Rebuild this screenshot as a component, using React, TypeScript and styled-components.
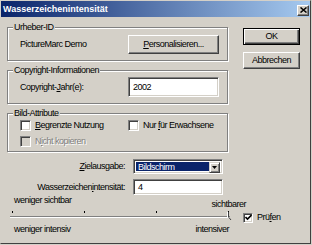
import React from 'react';
import styled, { createGlobalStyle, css } from 'styled-components';

const FONT = `"Liberation Sans", Arial, sans-serif`;

const Global = createGlobalStyle`
  html, body { margin: 0; padding: 0; background: #d4d0c8; }
  * { box-sizing: border-box; }
`;

const Window = styled.div`
  width: 311px;
  height: 244px;
  background: #d4d0c8;
  border-top: 1px solid #d4d0c8;
  border-left: 1px solid #d4d0c8;
  border-right: 1px solid #404040;
  border-bottom: 1px solid #404040;
  font: 9px/11px ${FONT};
  letter-spacing: -0.5px;
  color: #000;
  display: flex;
  flex-direction: column;
  overflow: hidden;
`;

const TitleBar = styled.div`
  height: 16px;
  background: linear-gradient(to right, #0a246a, #a6caf0);
  display: flex;
  align-items: center;
  justify-content: space-between;
  padding: 0 1px 0 2px;
`;

const TitleText = styled.span`
  font: bold 9px/11px "Liberation Sans", Arial, sans-serif;
  letter-spacing: 0;
  color: #fff;
`;

const CloseButton = styled.div`
  width: 12px;
  height: 11px;
  margin-top: 2px;
  background: #d4d0c8;
  border: 1px solid;
  border-color: #fff #404040 #404040 #fff;
  box-shadow: inset -1px -1px 0 #808080;
  display: flex;
  align-items: center;
  justify-content: center;
`;

const Body = styled.div`
  flex: 1;
  padding: 0 0 0 6px;
  display: flex;
  flex-direction: column;
`;

const TopRow = styled.div`
  display: flex;
  align-items: flex-start;
`;

const LeftCol = styled.div`
  width: 221px;
  display: flex;
  flex-direction: column;
  padding-top: 5px;
  gap: 4px;
`;

const RightCol = styled.div`
  margin-left: 15px;
  padding-top: 11px;
  display: flex;
  flex-direction: column;
  gap: 7px;
`;

const Group = styled.fieldset<{ $pt: number; $pb: number }>`
  margin: 0;
  min-width: 0;
  border: 1px solid #808080;
  box-shadow: inset 1px 1px 0 #fff, 1px 1px 0 #fff;
  padding: ${p => p.$pt}px 0 ${p => p.$pb}px 5px;
`;

const Legend = styled.legend`
  padding: 0 1px;
  background: #d4d0c8;
  line-height: 11px;
`;

const Row = styled.div<{ $h: number; $mt?: number }>`
  display: flex;
  align-items: center;
  height: ${p => p.$h}px;
  margin-top: ${p => p.$mt ?? 0}px;
  padding-left: 7px;
`;

const Label = styled.span<{ $w?: number }>`
  width: ${p => (p.$w ? `${p.$w}px` : 'auto')};
  white-space: nowrap;
`;

const U = styled.span`
  text-decoration: underline;
`;

const Button = styled.button<{ $w: number; $h: number; $default?: boolean }>`
  font: inherit;
  letter-spacing: inherit;
  color: #000;
  background: #d4d0c8;
  width: ${p => p.$w}px;
  height: ${p => p.$h}px;
  padding: 0;
  border: 1px solid;
  border-color: #fff #404040 #404040 #fff;
  box-shadow: inset -1px -1px 0 #808080;
  ${p =>
    p.$default &&
    css`
      border-color: #000;
      box-shadow: inset 1px 1px 0 #fff, inset -1px -1px 0 #404040, inset -2px -2px 0 #808080;
    `}
`;

const sunken = css`
  background: #fff;
  border: 1px solid;
  border-color: #808080 #fff #fff #808080;
  box-shadow: inset 1px 1px 0 #404040, inset -1px -1px 0 #d4d0c8;
`;

const TextInput = styled.div<{ $w: number; $h: number }>`
  ${sunken};
  width: ${p => p.$w}px;
  height: ${p => p.$h}px;
  display: flex;
  align-items: center;
  padding-left: 4px;
`;

const CheckBox = styled.span<{ $size: number; $disabled?: boolean }>`
  ${sunken};
  width: ${p => p.$size}px;
  height: ${p => p.$size}px;
  flex: none;
  display: inline-flex;
  align-items: center;
  justify-content: center;
  ${p => p.$disabled && css`background: #d4d0c8;`}
`;

const CheckLabel = styled.span<{ $disabled?: boolean }>`
  margin-left: 4px;
  white-space: nowrap;
  ${p =>
    p.$disabled &&
    css`
      color: #808080;
      text-shadow: 1px 1px 0 #fff;
    `}
`;

const CheckItem = styled.label<{ $w?: number }>`
  display: flex;
  align-items: center;
  width: ${p => (p.$w ? `${p.$w}px` : 'auto')};
`;

const FormGrid = styled.div`
  margin-top: 7px;
  display: grid;
  grid-template-columns: 118px 90px;
  column-gap: 8px;
  row-gap: 5px;
  align-items: center;
`;

const FormLabel = styled.span`
  text-align: right;
  white-space: nowrap;
`;

const Select = styled.div`
  ${sunken};
  height: 15px;
  display: flex;
  padding: 2px;
`;

const SelectValue = styled.div`
  flex: 1;
  background: #0a246a;
  color: #fff;
  padding-left: 2px;
  line-height: 11px;
`;

const DropButton = styled.div`
  width: 11px;
  height: 11px;
  background: #d4d0c8;
  border: 1px solid;
  border-color: #d4d0c8 #404040 #404040 #d4d0c8;
  box-shadow: inset 1px 1px 0 #fff, inset -1px -1px 0 #808080;
  display: flex;
  align-items: center;
  justify-content: center;
`;

const SliderSection = styled.div`
  display: flex;
  flex-direction: column;
  padding-left: 7px;
`;

const LabelPair = styled.div<{ $w: number }>`
  display: flex;
  justify-content: space-between;
  align-items: flex-start;
  width: ${p => p.$w}px;
`;

const Offset = styled.span<{ $top: number }>`
  padding-top: ${p => p.$top}px;
  white-space: nowrap;
`;

const TrackRow = styled.div`
  display: flex;
  align-items: center;
  margin-left: -4px;
  margin-top: 0;
  height: 13px;
`;

const Track = styled.svg`
  display: block;
  flex: none;
`;

const PruefenItem = styled.label`
  display: flex;
  align-items: center;
  margin-left: 11px;
  margin-top: 2px;
`;

const BottomLabels = styled(LabelPair)`
  margin-top: 1px;
`;

const Check = () => (
  <svg width="7" height="7" viewBox="0 0 7 7">
    <path d="M0.5 3 L2.5 5 L6.5 1" fill="none" stroke="#000" strokeWidth="1.6" />
  </svg>
);

export default function App() {
  const ticks = [2, 74, 146, 218];
  return (
    <>
      <Global />
      <Window>
        <TitleBar>
          <TitleText>Wasserzeichenintensität</TitleText>
          <CloseButton>
            <svg width="7" height="6" viewBox="0 0 7 6">
              <path d="M0.5 0.5 L6.5 5.5 M6.5 0.5 L0.5 5.5" stroke="#000" strokeWidth="1.5" />
            </svg>
          </CloseButton>
        </TitleBar>
        <Body>
          <TopRow>
            <LeftCol>
              <Group $pt={2} $pb={6}>
                <Legend>Urheber-ID</Legend>
                <Row $h={19}>
                  <Label $w={108}>PictureMarc Demo</Label>
                  <Button $w={91} $h={19}>
                    <U>P</U>ersonalisieren...
                  </Button>
                </Row>
              </Group>
              <Group $pt={1} $pb={6}>
                <Legend>Copyright-Informationen</Legend>
                <Row $h={20}>
                  <Label $w={108}>
                    Copyright-<U>J</U>ahr(e):
                  </Label>
                  <TextInput $w={91} $h={20}>2002</TextInput>
                </Row>
              </Group>
              <Group $pt={0} $pb={3}>
                <Legend>Bild-Attribute</Legend>
                <Row $h={13}>
                  <CheckItem $w={108}>
                    <CheckBox $size={11} />
                    <CheckLabel>
                      <U>B</U>egrenzte Nutzung
                    </CheckLabel>
                  </CheckItem>
                  <CheckItem>
                    <CheckBox $size={11} />
                    <CheckLabel>
                      Nur <U>f</U>ür Erwachsene
                    </CheckLabel>
                  </CheckItem>
                </Row>
                <Row $h={13} $mt={3}>
                  <CheckItem>
                    <CheckBox $size={11} $disabled />
                    <CheckLabel $disabled>
                      N<U>i</U>cht kopieren
                    </CheckLabel>
                  </CheckItem>
                </Row>
              </Group>
            </LeftCol>
            <RightCol>
              <Button $w={57} $h={17} $default>
                OK
              </Button>
              <Button $w={57} $h={17}>
                Abbrechen
              </Button>
            </RightCol>
          </TopRow>
          <FormGrid>
            <FormLabel>
              <U>Z</U>ielausgabe:
            </FormLabel>
            <Select>
              <SelectValue>Bildschirm</SelectValue>
              <DropButton>
                <svg width="5" height="3" viewBox="0 0 5 3">
                  <path d="M0 0 H5 L2.5 3 Z" fill="#000" />
                </svg>
              </DropButton>
            </Select>
            <FormLabel>
              Wasserzeichen<U>i</U>ntensität:
            </FormLabel>
            <TextInput $w={90} $h={16}>4</TextInput>
          </FormGrid>
          <SliderSection>
            <LabelPair $w={232}>
              <Offset $top={0}>weniger sichtbar</Offset>
              <Offset $top={4}>sichtbarer</Offset>
            </LabelPair>
            <TrackRow>
              <Track width="222" height="13" viewBox="0 0 222 13">
                {ticks.map(x => (
                  <rect key={x} x={x} y={1} width={1} height={2} fill="#000" />
                ))}
                <rect x={0} y={6} width={220} height={1} fill="#808080" />
                <rect x={0} y={7} width={220} height={1} fill="#fff" />
                <path d="M218.5 2 V7 L221 10" fill="none" stroke="#404040" strokeWidth="1" />
                <path d="M217.5 2 V8" fill="none" stroke="#fff" strokeWidth="1" />
              </Track>
              <PruefenItem>
                <CheckBox $size={10}>
                  <Check />
                </CheckBox>
                <CheckLabel>
                  Prü<U>f</U>en
                </CheckLabel>
              </PruefenItem>
            </TrackRow>
            <BottomLabels $w={215}>
              <span>weniger intensiv</span>
              <span>intensiver</span>
            </BottomLabels>
          </SliderSection>
        </Body>
      </Window>
    </>
  );
}
